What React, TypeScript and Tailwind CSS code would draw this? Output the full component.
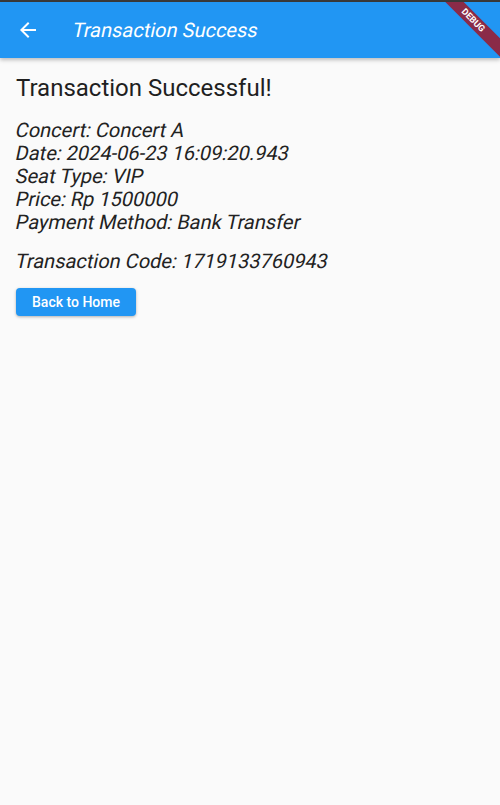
import React from 'react';

const details = [
  'Concert: Concert A',
  'Date: 2024-06-23 16:09:20.943',
  'Seat Type: VIP',
  'Price: Rp 1500000',
  'Payment Method: Bank Transfer',
];

// Flutter slants the regular face instead of using a true italic
const Slanted: React.FC<{ children: React.ReactNode }> = ({ children }) => (
  <span className="inline-block -skew-x-12 origin-left">{children}</span>
);

const App: React.FC = () => {
  return (
    <div
      className="relative w-[500px] h-[805px] overflow-hidden bg-[#fafafa] text-[#1f1f1f]"
      style={{ fontFamily: 'Roboto, "Noto Sans", sans-serif' }}
    >
      <div className="h-[2px] bg-[#3a3a3a]"></div>
      {/* app bar */}
      <header className="relative z-10 h-[56px] bg-[#2196f3] flex items-center shadow-[0_2px_4px_rgba(0,0,0,0.25)]">
        <button className="w-[56px] h-[56px] flex items-center justify-center text-white">
          <svg width="24" height="24" viewBox="0 0 24 24" fill="currentColor">
            <path d="M20 11H7.83l5.59-5.59L12 4l-8 8 8 8 1.41-1.41L7.83 13H20v-2z" />
          </svg>
        </button>
        <h1 className="ml-[17px] text-[20px] text-white leading-none">
          <Slanted>Transaction Success</Slanted>
        </h1>
      </header>

      <main className="p-4">
        <h2 className="text-[24px] leading-[28px] text-[#1f1f1f]">Transaction Successful!</h2>
        <div className="mt-[17px] text-[20px] leading-[23px] text-[#222]">
          {details.map((d) => (
            <p key={d}>
              <Slanted>{d}</Slanted>
            </p>
          ))}
        </div>
        <p className="mt-[16px] text-[20px] leading-[23px] text-[#222]">
          <Slanted>Transaction Code: 1719133760943</Slanted>
        </p>
        <button className="mt-[15px] h-[28px] w-[120px] rounded-[4px] bg-[#2196f3] text-white text-[14px] font-medium shadow-[0_1px_3px_rgba(0,0,0,0.3)]">
          Back to Home
        </button>
      </main>

      {/* debug banner */}
      <div className="absolute top-[2px] right-0 w-[64px] h-[64px] overflow-hidden z-20 pointer-events-none">
        <div className="absolute top-[12px] right-[-28px] w-[110px] h-[13px] rotate-45 bg-[#8a2b48] flex items-center justify-center">
          <span className="text-[9px] font-bold text-white leading-none">DEBUG</span>
        </div>
      </div>
    </div>
  );
};

export default App;
